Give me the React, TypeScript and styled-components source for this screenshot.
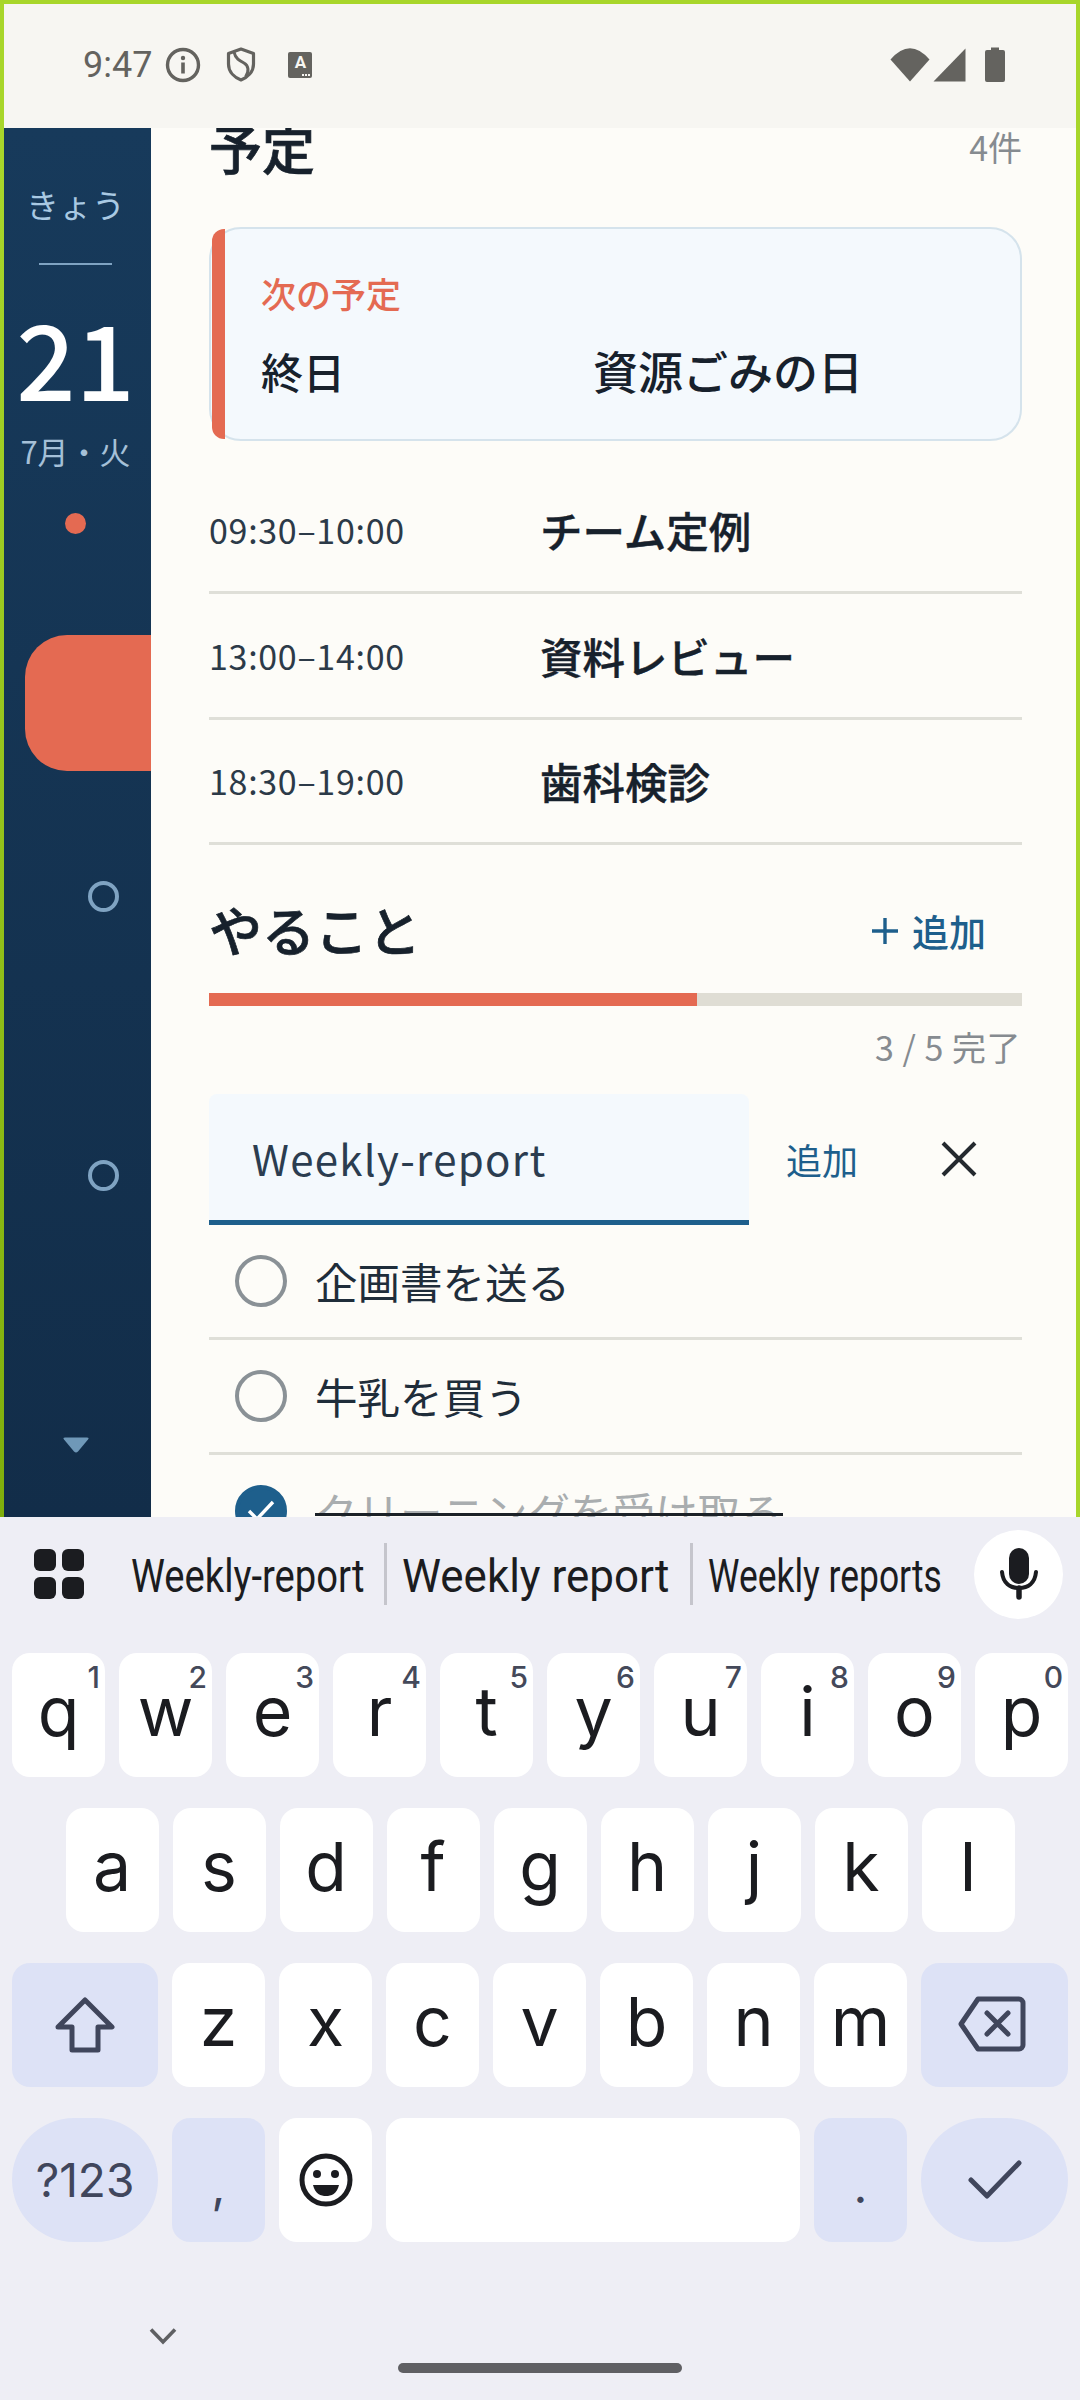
import { createGlobalStyle } from 'styled-components';
import styled from 'styled-components';

const GlobalStyle = createGlobalStyle`
  html, body {
    margin: 0;
    width: 1080px;
    height: 2400px;
    overflow: hidden;
    background: #eeeef5;
    font-family: 'Noto Sans CJK JP', 'Noto Sans', sans-serif;
  }
  * { box-sizing: border-box; }
`;

const schedule = [
  { time: '09:30–10:00', title: 'チーム定例' },
  { time: '13:00–14:00', title: '資料レビュー' },
  { time: '18:30–19:00', title: '歯科検診' },
];

const todos = [
  { label: '企画書を送る', done: false },
  { label: '牛乳を買う', done: false },
  { label: 'クリーニングを受け取る', done: true },
];

const rowOne = [['q', '1'], ['w', '2'], ['e', '3'], ['r', '4'], ['t', '5'], ['y', '6'], ['u', '7'], ['i', '8'], ['o', '9'], ['p', '0']];
const rowTwo = ['a', 's', 'd', 'f', 'g', 'h', 'j', 'k', 'l'];
const rowThree = ['z', 'x', 'c', 'v', 'b', 'n', 'm'];

export default function App() {
  return (
    <Page>
      <GlobalStyle />
      <Frame>
        <StatusBar>
          <Clock>9:47</Clock>
          <svg width="36" height="36" viewBox="0 0 36 36" style={{ marginLeft: 13 }}>
            <circle cx="18" cy="18" r="15.5" fill="none" stroke="#64635f" strokeWidth="3.4" />
            <rect x="16.2" y="15.5" width="3.6" height="11" fill="#64635f" />
            <circle cx="18" cy="11" r="2.2" fill="#64635f" />
          </svg>
          <svg width="30" height="35" viewBox="0 0 30 35" style={{ marginLeft: 25 }}>
            <path d="M15 2 L27.5 6.5 V17 C27.5 25 21.5 30.5 15 33 C8.5 30.5 2.5 25 2.5 17 V6.5 Z" fill="none" stroke="#64635f" strokeWidth="3.2" strokeLinejoin="round" />
            <path d="M8 5 C9.5 12 14 14 18 16 C22.5 18.5 23.5 24 19.5 30" fill="none" stroke="#64635f" strokeWidth="3" />
          </svg>
          <InputBadge>
            A
            <BadgeDots>
              <i />
              <i />
              <i />
            </BadgeDots>
          </InputBadge>
          <StatusRight>
            <svg width="40" height="34" viewBox="0 0 40 34">
              <path d="M20 33.5 L0.5 11.5 Q20 -11 39.5 11.5 Z" fill="#64635f" />
            </svg>
            <svg width="33" height="34" viewBox="0 0 33 34" style={{ marginLeft: 3 }}>
              <path d="M32.5 0.5 V33.5 H0.5 Z" fill="#64635f" />
            </svg>
            <svg width="20" height="35" viewBox="0 0 20 35" style={{ marginLeft: 19 }}>
              <path d="M6 0.5 H14 V3 H18 A2 2 0 0 1 20 5 V33 A2 2 0 0 1 18 35 H2 A2 2 0 0 1 0 33 V5 A2 2 0 0 1 2 3 H6 Z" fill="#64635f" />
            </svg>
          </StatusRight>
        </StatusBar>
        <Body>
          <Sidebar>
            <TodayLabel>きょう</TodayLabel>
            <SideRule />
            <DayNumber>21</DayNumber>
            <MonthLabel>7月・火</MonthLabel>
            <SideDot />
            <ActiveTab />
            <Ring $gap={110} />
            <Ring $gap={248} />
            <MoreArrow viewBox="0 0 28 18" width="28" height="18">
              <path d="M3 1.5 H25 Q27.5 1.5 26 3.6 L16 15.6 Q14 17.6 12 15.6 L2 3.6 Q0.5 1.5 3 1.5 Z" fill="#6f98b8" />
            </MoreArrow>
          </Sidebar>
          <Content>
            <ScheduleHead>
              <SectionTitle>予定</SectionTitle>
              <MutedText>4件</MutedText>
            </ScheduleHead>
            <NextCard>
              <CardAccent />
              <NextLabel>次の予定</NextLabel>
              <NextRow>
                <NextTime>終日</NextTime>
                <span>資源ごみの日</span>
              </NextRow>
            </NextCard>
            <ScheduleList>
              {schedule.map((item) => (
                <ScheduleRow key={item.time}>
                  <TimeText>{item.time}</TimeText>
                  <RowTitle>{item.title}</RowTitle>
                </ScheduleRow>
              ))}
            </ScheduleList>
            <TodoHead>
              <SectionTitle>やること</SectionTitle>
              <AddLink>
                <svg width="28" height="28" viewBox="0 0 28 28">
                  <path d="M14 1 V27 M1 14 H27" stroke="#1e5f8c" strokeWidth="3.4" />
                </svg>
                追加
              </AddLink>
            </TodoHead>
            <Progress>
              <ProgressFill style={{ width: `${(3 / 5) * 100}%` }} />
            </Progress>
            <CountLine>3 / 5 完了</CountLine>
            <InputRow>
              <TextField>Weekly-report</TextField>
              <InlineAdd>追加</InlineAdd>
              <svg width="36" height="36" viewBox="0 0 36 36" style={{ marginLeft: 83 }}>
                <path d="M2 2 L34 34 M34 2 L2 34" stroke="#24292e" strokeWidth="4" />
              </svg>
            </InputRow>
            {todos.map((todo) => (
              <TodoRow key={todo.label}>
                <CheckCircle $done={todo.done}>
                  {todo.done && (
                    <svg width="30" height="24" viewBox="0 0 30 24">
                      <path d="M3 12 L11 20 L27 3" fill="none" stroke="#fff" strokeWidth="3.4" />
                    </svg>
                  )}
                </CheckCircle>
                <TodoLabel $done={todo.done}>{todo.label}</TodoLabel>
              </TodoRow>
            ))}
          </Content>
        </Body>
      </Frame>
      <Keyboard>
        <SuggestionBar>
          <svg width="50" height="50" viewBox="0 0 50 50" style={{ flex: 'none' }}>
            <rect x="0" y="0" width="22" height="22" rx="6" fill="#1b1c20" />
            <rect x="28" y="0" width="22" height="22" rx="6" fill="#1b1c20" />
            <rect x="0" y="28" width="22" height="22" rx="6" fill="#1b1c20" />
            <rect x="28" y="28" width="22" height="22" rx="6" fill="#1b1c20" />
          </svg>
          <Suggestion $width={253} $left={47} $squeeze={0.83}>
            <span>Weekly-report</span>
          </Suggestion>
          <SuggestionRule />
          <Suggestion $width={288} $left={15} $squeeze={0.955}>
            <span>Weekly report</span>
          </Suggestion>
          <SuggestionRule />
          <Suggestion $width={240} $left={15} $squeeze={0.77}>
            <span>Weekly reports</span>
          </Suggestion>
          <MicButton>
            <svg width="38" height="52" viewBox="0 0 38 52">
              <rect x="9" y="0" width="20" height="36" rx="10" fill="#1b1c20" />
              <path d="M2 24 C3 35 10 40 19 40 C28 40 35 35 36 24" fill="none" stroke="#1b1c20" strokeWidth="4" strokeLinecap="round" />
              <path d="M19 40 V49" stroke="#1b1c20" strokeWidth="5.5" strokeLinecap="round" />
            </svg>
          </MicButton>
        </SuggestionBar>
        <KeyRows>
          <KeyRow>
            {rowOne.map(([letter, digit]) => (
              <Key key={letter} $letter>
                {letter}
                <Hint>{digit}</Hint>
              </Key>
            ))}
          </KeyRow>
          <KeyRow>
            {rowTwo.map((letter) => (
              <Key key={letter} $letter>
                {letter}
              </Key>
            ))}
          </KeyRow>
          <KeyRow>
            <Key $width={146} $fn>
              <svg width="60" height="56" viewBox="0 0 60 56">
                <path d="M30 3 L57 30 H43 V53 H17 V30 H3 Z" fill="none" stroke="#40465c" strokeWidth="5" strokeLinejoin="round" />
              </svg>
            </Key>
            {rowThree.map((letter) => (
              <Key key={letter} $letter>
                {letter}
              </Key>
            ))}
            <Key $width={147} $fn>
              <BackspaceIcon width="68" height="56" viewBox="0 0 68 56">
                <path d="M20 3 H61 A4 4 0 0 1 65 7 V49 A4 4 0 0 1 61 53 H20 L3 28 Z" fill="none" stroke="#40465c" strokeWidth="5" strokeLinejoin="round" />
                <path d="M29 17 L50 38 M50 17 L29 38" stroke="#40465c" strokeWidth="5" strokeLinecap="round" />
              </BackspaceIcon>
            </Key>
          </KeyRow>
          <KeyRow>
            <Key $width={146} $fn $round $small>
              ?123
            </Key>
            <Key $fn $punct>
              ,
            </Key>
            <Key>
              <svg width="54" height="54" viewBox="0 0 54 54">
                <circle cx="27" cy="27" r="24" fill="none" stroke="#1b1c20" strokeWidth="5" />
                <circle cx="18" cy="21" r="4" fill="#1b1c20" />
                <circle cx="36" cy="21" r="4" fill="#1b1c20" />
                <path d="M14 32 H40 C38 41 32 43 27 43 C22 43 16 41 14 32 Z" fill="#1b1c20" />
              </svg>
            </Key>
            <Key $width={414} />
            <Key $fn $punct>
              .
            </Key>
            <Key $width={147} $fn $round>
              <svg width="54" height="40" viewBox="0 0 54 40">
                <path d="M3 20 L19 36 L51 3" fill="none" stroke="#40465c" strokeWidth="5" strokeLinecap="round" strokeLinejoin="round" />
              </svg>
            </Key>
          </KeyRow>
        </KeyRows>
        <NavBar>
          <HideChevron width="28" height="18" viewBox="0 0 28 18">
            <path d="M2 2.5 L14 15 L26 2.5" fill="none" stroke="#5f6063" strokeWidth="3.6" />
          </HideChevron>
          <HomePill />
        </NavBar>
      </Keyboard>
    </Page>
  );
}

const Page = styled.div`
  display: flex;
  flex-direction: column;
  width: 1080px;
  height: 2400px;
`;

const Frame = styled.div`
  display: flex;
  flex-direction: column;
  height: 1517px;
  border-style: solid;
  border-width: 4px 4px 0 4px;
  border-image: linear-gradient(to top right, #7fae0c 0%, #a8d62b 45%) 1;
  overflow: hidden;
`;

const StatusBar = styled.div`
  display: flex;
  align-items: center;
  flex: none;
  height: 124px;
  padding: 0 71px 3px 79px;
  background: #f7f6f2;
`;

const Clock = styled.span`
  font-family: Roboto, sans-serif;
  font-size: 36px;
  color: #64635f;
  line-height: 1;
`;

const InputBadge = styled.div`
  position: relative;
  width: 24px;
  height: 26px;
  margin-left: 32px;
  padding-top: 1px;
  border-radius: 2px;
  background: #64635f;
  color: #f7f6f2;
  font-family: Roboto, sans-serif;
  font-size: 17px;
  font-weight: 700;
  line-height: 18px;
  text-align: center;
`;

const BadgeDots = styled.div`
  position: absolute;
  right: 2px;
  bottom: 2px;
  display: flex;
  gap: 1px;

  i {
    width: 2px;
    height: 2px;
    background: #f7f6f2;
  }
`;

const StatusRight = styled.div`
  display: flex;
  align-items: center;
  margin-left: auto;
`;

const Body = styled.div`
  display: flex;
  flex: 1;
  min-height: 0;
  background: #fdfcf8;
`;

const Sidebar = styled.div`
  display: flex;
  flex-direction: column;
  align-items: center;
  flex: none;
  width: 147px;
  padding-right: 4px;
  background: linear-gradient(180deg, #173a5b 0%, #122d49 100%);
`;

const TodayLabel = styled.div`
  margin-top: 54px;
  color: #a9c9e3;
  font-size: 33px;
  line-height: 44px;
  white-space: nowrap;
`;

const SideRule = styled.div`
  width: 73px;
  height: 2px;
  margin-top: 37px;
  background: #7fa3c2;
`;

const DayNumber = styled.div`
  margin-top: 37px;
  color: #fff;
  font-size: 104px;
  font-weight: 500;
  line-height: 108px;
`;

const MonthLabel = styled.div`
  margin-top: 20px;
  color: #a5c0d8;
  font-size: 31px;
  line-height: 42px;
  white-space: nowrap;
`;

const SideDot = styled.div`
  width: 21px;
  height: 21px;
  margin-top: 41px;
  border-radius: 50%;
  background: #e46a52;
`;

const ActiveTab = styled.div`
  align-self: flex-end;
  width: 126px;
  height: 136px;
  margin-top: 101px;
  margin-right: -4px;
  border-radius: 42px 0 0 42px;
  background: #e46a52;
`;

const Ring = styled.div<{ $gap: number }>`
  align-self: flex-end;
  width: 31px;
  height: 31px;
  margin-top: ${({ $gap }) => $gap}px;
  margin-right: 28px;
  border: 4px solid #7fa3c2;
  border-radius: 50%;
`;

const MoreArrow = styled.svg`
  margin-top: 245px;
`;

const Content = styled.div`
  flex: 1;
  min-width: 0;
  padding: 0 54px 0 58px;
  overflow: hidden;
`;

const ScheduleHead = styled.div`
  display: flex;
  justify-content: space-between;
  align-items: center;
  height: 76px;
  margin-top: -19px;
`;

const SectionTitle = styled.h2`
  margin: 0;
  color: #17212c;
  font-size: 53px;
  font-weight: 500;
  line-height: 76px;
  -webkit-text-stroke: 0.7px #17212c;
`;

const MutedText = styled.span`
  margin-top: -2px;
  color: #868b90;
  font-size: 34px;
`;

const NextCard = styled.div`
  position: relative;
  height: 214px;
  margin-top: 42px;
  padding: 40px 0 0 50px;
  border: 2px solid #d5e3ec;
  border-radius: 32px;
  background: #f4f9fd;
`;

const CardAccent = styled.div`
  position: absolute;
  top: 0;
  bottom: 0;
  left: 1px;
  width: 13px;
  border-radius: 12px 0 0 12px;
  background: #e46a52;
`;

const NextLabel = styled.div`
  color: #e46a52;
  font-size: 35px;
  font-weight: 500;
  line-height: 48px;
`;

const NextRow = styled.div`
  display: flex;
  align-items: center;
  margin-top: 24px;
  color: #17212c;
  font-size: 45px;
  font-weight: 500;
  line-height: 60px;
`;

const NextTime = styled.span`
  width: 332px;
  font-size: 42px;
`;

const ScheduleList = styled.div`
  margin-top: 27.5px;
`;

const ScheduleRow = styled.div`
  display: flex;
  align-items: center;
  height: 125.5px;
  border-bottom: 3px solid #dfdfd8;
`;

const TimeText = styled.span`
  width: 331px;
  color: #2c3a48;
  font-size: 34px;
  letter-spacing: 0.7px;
`;

const RowTitle = styled.span`
  color: #17212c;
  font-size: 42.5px;
  font-weight: 500;
  -webkit-text-stroke: 0.4px #17212c;
`;

const TodoHead = styled.div`
  display: flex;
  justify-content: space-between;
  align-items: center;
  height: 76px;
  margin-top: 46px;
  padding-right: 36px;
`;

const AddLink = styled.span`
  display: flex;
  align-items: center;
  gap: 13px;
  padding-top: 3px;
  color: #1e5f8c;
  font-size: 37px;
  font-weight: 500;
`;

const Progress = styled.div`
  height: 13px;
  margin-top: 26px;
  background: #dfddd4;
`;

const ProgressFill = styled.div`
  height: 100%;
  background: #e46a52;
`;

const CountLine = styled.div`
  margin-top: 17px;
  padding-right: 1px;
  color: #868b90;
  font-size: 34px;
  letter-spacing: 0.5px;
  line-height: 48px;
  text-align: right;
`;

const InputRow = styled.div`
  display: flex;
  align-items: center;
  margin-top: 22.5px;
`;

const TextField = styled.div`
  display: flex;
  align-items: center;
  flex: none;
  width: 540px;
  height: 131px;
  padding: 2px 0 0 43px;
  border-bottom: 5px solid #1e5f8c;
  border-radius: 8px 8px 0 0;
  background: #f4f9fd;
  color: #2b3d50;
  font-size: 42px;
  letter-spacing: 1.3px;
`;

const InlineAdd = styled.span`
  margin-left: 37px;
  color: #1e5f8c;
  font-size: 36px;
`;

const TodoRow = styled.div`
  display: flex;
  align-items: center;
  height: 115px;
  padding-left: 26px;
  border-bottom: 3px solid #dfdfd8;
`;

const CheckCircle = styled.div<{ $done: boolean }>`
  display: flex;
  justify-content: center;
  align-items: center;
  flex: none;
  width: 52px;
  height: 52px;
  border: 4px solid ${({ $done }) => ($done ? '#1e5f8c' : '#8a9196')};
  border-radius: 50%;
  background: ${({ $done }) => ($done ? '#1e5f8c' : 'transparent')};
`;

const TodoLabel = styled.span<{ $done: boolean }>`
  position: relative;
  margin-left: 28px;
  color: ${({ $done }) => ($done ? '#a9adaf' : '#1f2d3a')};
  font-size: 42.5px;
  line-height: 60px;

  &::after {
    content: '';
    display: ${({ $done }) => ($done ? 'block' : 'none')};
    position: absolute;
    top: 32px;
    left: 0;
    right: 0;
    height: 3px;
    background: #1b2127;
  }
`;

const Keyboard = styled.div`
  display: flex;
  flex-direction: column;
  flex: 1;
  background: #eeeef5;
`;

const SuggestionBar = styled.div`
  display: flex;
  align-items: center;
  flex: none;
  height: 136px;
  padding: 0 17px 22px 34px;
`;

const Suggestion = styled.div<{ $width: number; $left: number; $squeeze: number }>`
  flex: none;
  width: ${({ $width }) => $width}px;
  margin-left: ${({ $left }) => $left}px;
  padding-top: 4px;
  color: #1b1c20;
  font-family: Roboto, sans-serif;
  font-size: 46px;
  white-space: nowrap;

  span {
    display: inline-block;
    transform: scaleX(${({ $squeeze }) => $squeeze});
    transform-origin: left center;
  }
`;

const SuggestionRule = styled.div`
  flex: none;
  width: 3px;
  height: 62px;
  background: #c5c5cc;
`;

const MicButton = styled.div`
  display: flex;
  justify-content: center;
  align-items: center;
  flex: none;
  width: 89px;
  height: 89px;
  margin-left: auto;
  border-radius: 50%;
  background: #fff;
`;

const KeyRows = styled.div`
  display: flex;
  flex-direction: column;
  gap: 31px;
`;

const KeyRow = styled.div`
  display: flex;
  justify-content: center;
  gap: 14px;
  height: 124px;
`;

type KeyProps = {
  $width?: number;
  $fn?: boolean;
  $round?: boolean;
  $small?: boolean;
  $punct?: boolean;
  $letter?: boolean;
};

const Key = styled.div<KeyProps>`
  position: relative;
  display: flex;
  justify-content: center;
  align-items: ${({ $punct }) => ($punct ? 'flex-end' : 'center')};
  flex: none;
  width: ${({ $width }) => $width ?? 93}px;
  height: 124px;
  padding-bottom: ${({ $punct, $letter }) => ($punct ? '32px' : $letter ? '9px' : '0')};
  border-radius: ${({ $round }) => ($round ? '62px' : '18px')};
  background: ${({ $fn }) => ($fn ? '#dde2f6' : '#fff')};
  color: ${({ $fn }) => ($fn ? '#40465c' : '#1b1c20')};
  font-family: Inter, Roboto, sans-serif;
  font-size: ${({ $small, $punct }) => ($small ? '46px' : $punct ? '48px' : '68px')};
  line-height: 1;
`;

const BackspaceIcon = styled.svg`
  margin: 0 0 2px -5px;
`;

const Hint = styled.span`
  position: absolute;
  top: 6px;
  right: 5px;
  color: #44495a;
  font-size: 30px;
  font-weight: 500;
  line-height: 36px;
`;

const NavBar = styled.div`
  position: relative;
  flex: 1;
`;

const HideChevron = styled.svg`
  position: absolute;
  top: 85px;
  left: 149px;
`;

const HomePill = styled.div`
  position: absolute;
  top: 121px;
  left: 398px;
  width: 284px;
  height: 10px;
  border-radius: 5px;
  background: #5f5f63;
`;
